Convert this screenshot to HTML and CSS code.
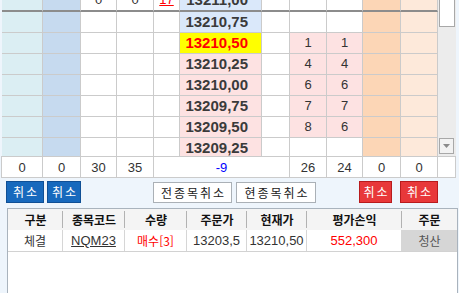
FILE: index.html
```html
<!DOCTYPE html>
<html lang="ko">
<head>
<meta charset="utf-8">
<link rel="stylesheet" href="styles.css">
</head>
<body>
<div class="book">
  <div class="clip">
    <div class="grid">
      <div class="c c1 r0"></div><div class="c c2 r0"></div><div class="c r0">0</div><div class="c r0">0</div><div class="c r0 red ul">17</div><div class="c price ask r0">13211,00</div><div class="c r0"></div><div class="c r0"></div><div class="c r0"></div><div class="c o1 r0"></div><div class="c o2 r0"></div>

      <div class="c c1"></div><div class="c c2"></div><div class="c"></div><div class="c"></div><div class="c"></div><div class="c price ask">13210,75</div><div class="c"></div><div class="c"></div><div class="c"></div><div class="c o1"></div><div class="c o2"></div>

      <div class="c c1"></div><div class="c c2"></div><div class="c"></div><div class="c"></div><div class="c"></div><div class="c price cur">13210,50</div><div class="c"></div><div class="c pk">1</div><div class="c pk">1</div><div class="c o1"></div><div class="c o2"></div>

      <div class="c c1"></div><div class="c c2"></div><div class="c"></div><div class="c"></div><div class="c"></div><div class="c price bid">13210,25</div><div class="c"></div><div class="c pk">4</div><div class="c pk">4</div><div class="c o1"></div><div class="c o2"></div>

      <div class="c c1"></div><div class="c c2"></div><div class="c"></div><div class="c"></div><div class="c"></div><div class="c price bid">13210,00</div><div class="c"></div><div class="c pk">6</div><div class="c pk">6</div><div class="c o1"></div><div class="c o2"></div>

      <div class="c c1"></div><div class="c c2"></div><div class="c"></div><div class="c"></div><div class="c"></div><div class="c price bid">13209,75</div><div class="c"></div><div class="c pk">7</div><div class="c pk">7</div><div class="c o1"></div><div class="c o2"></div>

      <div class="c c1"></div><div class="c c2"></div><div class="c"></div><div class="c"></div><div class="c"></div><div class="c price bid">13209,50</div><div class="c"></div><div class="c pk">8</div><div class="c pk">6</div><div class="c o1"></div><div class="c o2"></div>

      <div class="c c1"></div><div class="c c2"></div><div class="c"></div><div class="c"></div><div class="c"></div><div class="c price bid">13209,25</div><div class="c"></div><div class="c"></div><div class="c"></div><div class="c o1"></div><div class="c o2"></div>
    </div>
  </div>
  <div class="scroll">
    <div class="thumb"></div>
    <div class="down"><svg width="7" height="4" viewBox="0 0 7 4"><path d="M0 0H7L3.5 4Z" fill="#8a8a8a"/></svg></div>
  </div>
</div>

<div class="totals">
  <div class="t">0</div><div class="t">0</div><div class="t">30</div><div class="t">35</div><div class="t blue">-9</div><div class="t">26</div><div class="t">24</div><div class="t">0</div><div class="t">0</div><div class="t"></div>
</div>

<div class="actions">
  <button class="btn blue-btn w38">취소</button>
  <button class="btn blue-btn w34">취소</button>
  <button class="btn plain all">전종목취소</button>
  <button class="btn plain cur-btn">현종목취소</button>
  <button class="btn red-btn w33 r1">취소</button>
  <button class="btn red-btn w38">취소</button>
</div>

<div class="positions">
  <div class="prow head">
    <div class="h">구분</div><div class="h">종목코드</div><div class="h">수량</div><div class="h">주문가</div><div class="h">현재가</div><div class="h">평가손익</div><div class="h last">주문</div>
  </div>
  <div class="prow data">
    <div class="d ko">체결</div><div class="d ul code">NQM23</div><div class="d ko redt">매수[3]</div><div class="d">13203,5</div><div class="d">13210,50</div><div class="d redt">552,300</div><div class="d ko settle">청산</div>
  </div>
</div>
</body>
</html>
```

FILE: styles.css
```css
* { box-sizing: border-box; }

body {
  margin: 0;
  width: 459px;
  height: 293px;
  overflow: hidden;
  background: #eef5fc;
  color: #333;
  font-family: "Liberation Sans Narrow", "Liberation Sans", "Noto Sans CJK KR", sans-serif;
  font-size: 13px;
}

.book {
  display: flex;
}

.clip {
  width: 438px;
  height: 156px;
  padding-left: 2px;
  overflow: hidden;
}

.grid {
  display: grid;
  grid-template-columns: 41px 38px 36px 37px 26px 82px 28px 37px 36px 38px 37px;
  grid-auto-rows: 21px;
  margin-top: -10px;
  background: #fff;
}

.grid > .r0 {
  height: 22px;
  border-bottom: 2px solid #8c8c8c;
}

.grid {
  grid-template-rows: 22px;
}

.c {
  display: flex;
  align-items: center;
  justify-content: center;
  border-right: 1px solid #cbcbcb;
  border-bottom: 1px solid #cbcbcb;
  background: #fff;
  line-height: 1;
  padding-bottom: 1px;
}

.c1 { background: #dbeef3; }
.c2 { background: #c6daef; }
.o1 { background: #fcd6b6; }
.o2 { background: #fde9da; }
.pk { background: #fde2e2; }

.price {
  justify-content: flex-end;
  padding-right: 13px;
  font-family: "Liberation Sans", sans-serif;
  font-weight: bold;
  font-size: 15px;
  color: #3a3a3a;
}

.ask { background: #dae8fa; }
.bid { background: #fde2e2; }
.cur { background: #ffff00; color: #ff0000; }

.red { color: #ff0000; }
.ul { text-decoration: underline; }

.scroll {
  width: 18px;
  height: 156px;
  background: #ececec;
  display: flex;
  flex-direction: column;
  justify-content: space-between;
  padding: 0 1px 2px 1px;
}

.thumb {
  width: 16px;
  height: 27px;
  background: #fff;
  border: 1px solid #a8a8a8;
  border-top: none;
}

.down {
  width: 15px;
  height: 16px;
  border: 1px solid #a8a8a8;
  background: #f2f2f2;
  display: flex;
  align-items: center;
  justify-content: center;
}

.totals {
  display: grid;
  grid-template-columns: 41px 38px 36px 37px 136px 37px 36px 38px 37px 18px;
  margin-left: 1px;
  width: 455px;
  border-left: 1px solid #cbcbcb;
  border-top: 1px solid #cbcbcb;
  background: #fff;
}

.t {
  height: 21px;
  display: flex;
  align-items: center;
  justify-content: center;
  border-right: 1px solid #cbcbcb;
  border-bottom: 1px solid #cbcbcb;
  line-height: 1;
}

.blue { color: #0000ff; }

.actions {
  display: flex;
  align-items: center;
  margin-top: 3px;
  padding-left: 6px;
  height: 22px;
}

.btn {
  height: 22px;
  padding: 0;
  margin: 0;
  font-family: "Noto Sans CJK KR", sans-serif;
  font-size: 12px;
  line-height: 1;
  letter-spacing: 2px;
  text-indent: 2px;
  cursor: default;
}

.blue-btn {
  background: #1769bd;
  border: 1px solid #0f4f95;
  color: #fff;
}

.red-btn {
  background: #e8383a;
  border: 1px solid #b81b1d;
  color: #fff;
}

.plain {
  background: #fff;
  border: 1px solid #aab0b6;
  color: #222;
  height: 21px;
  margin-top: 1px;
}

.w38 { width: 38px; }
.w34 { width: 34px; margin-left: 3px; }
.w33 { width: 33px; }
.all { width: 79px; margin-left: 72px; }
.cur-btn { width: 80px; margin-left: 4px; }
.r1 { margin-left: 43px; margin-right: 8px; }

.positions {
  margin-top: 5px;
  margin-left: 7px;
  width: 451px;
  height: 90px;
  border: 1px solid #a9b3bd;
  background: #fff;
}

.prow {
  display: grid;
  grid-template-columns: 55px 62px 62px 60px 60px 95px 55px;
}

.head {
  height: 21px;
  background: #f4f4f4;
}

.h {
  display: flex;
  align-items: center;
  justify-content: center;
  font-family: "Noto Sans CJK KR", sans-serif;
  font-weight: bold;
  font-size: 12px;
  color: #111;
  background-image: linear-gradient(#b2b2b2, #b2b2b2);
  background-size: 1px 17px;
  background-position: right center;
  background-repeat: no-repeat;
}

.h.last { background-image: none; }

.data {
  height: 22px;
  border-bottom: 1px solid #d2d2d2;
}

.d {
  display: flex;
  align-items: center;
  justify-content: center;
  border-right: 1px solid #d6d6d6;
  line-height: 1;
  color: #333;
}

.ko {
  font-family: "Noto Sans CJK KR", sans-serif;
  font-size: 12px;
}

.code { color: #333; }
.redt { color: #ff0000; }

.settle {
  background: #d6d6d6;
  color: #555;
  border-right: none;
}
```
